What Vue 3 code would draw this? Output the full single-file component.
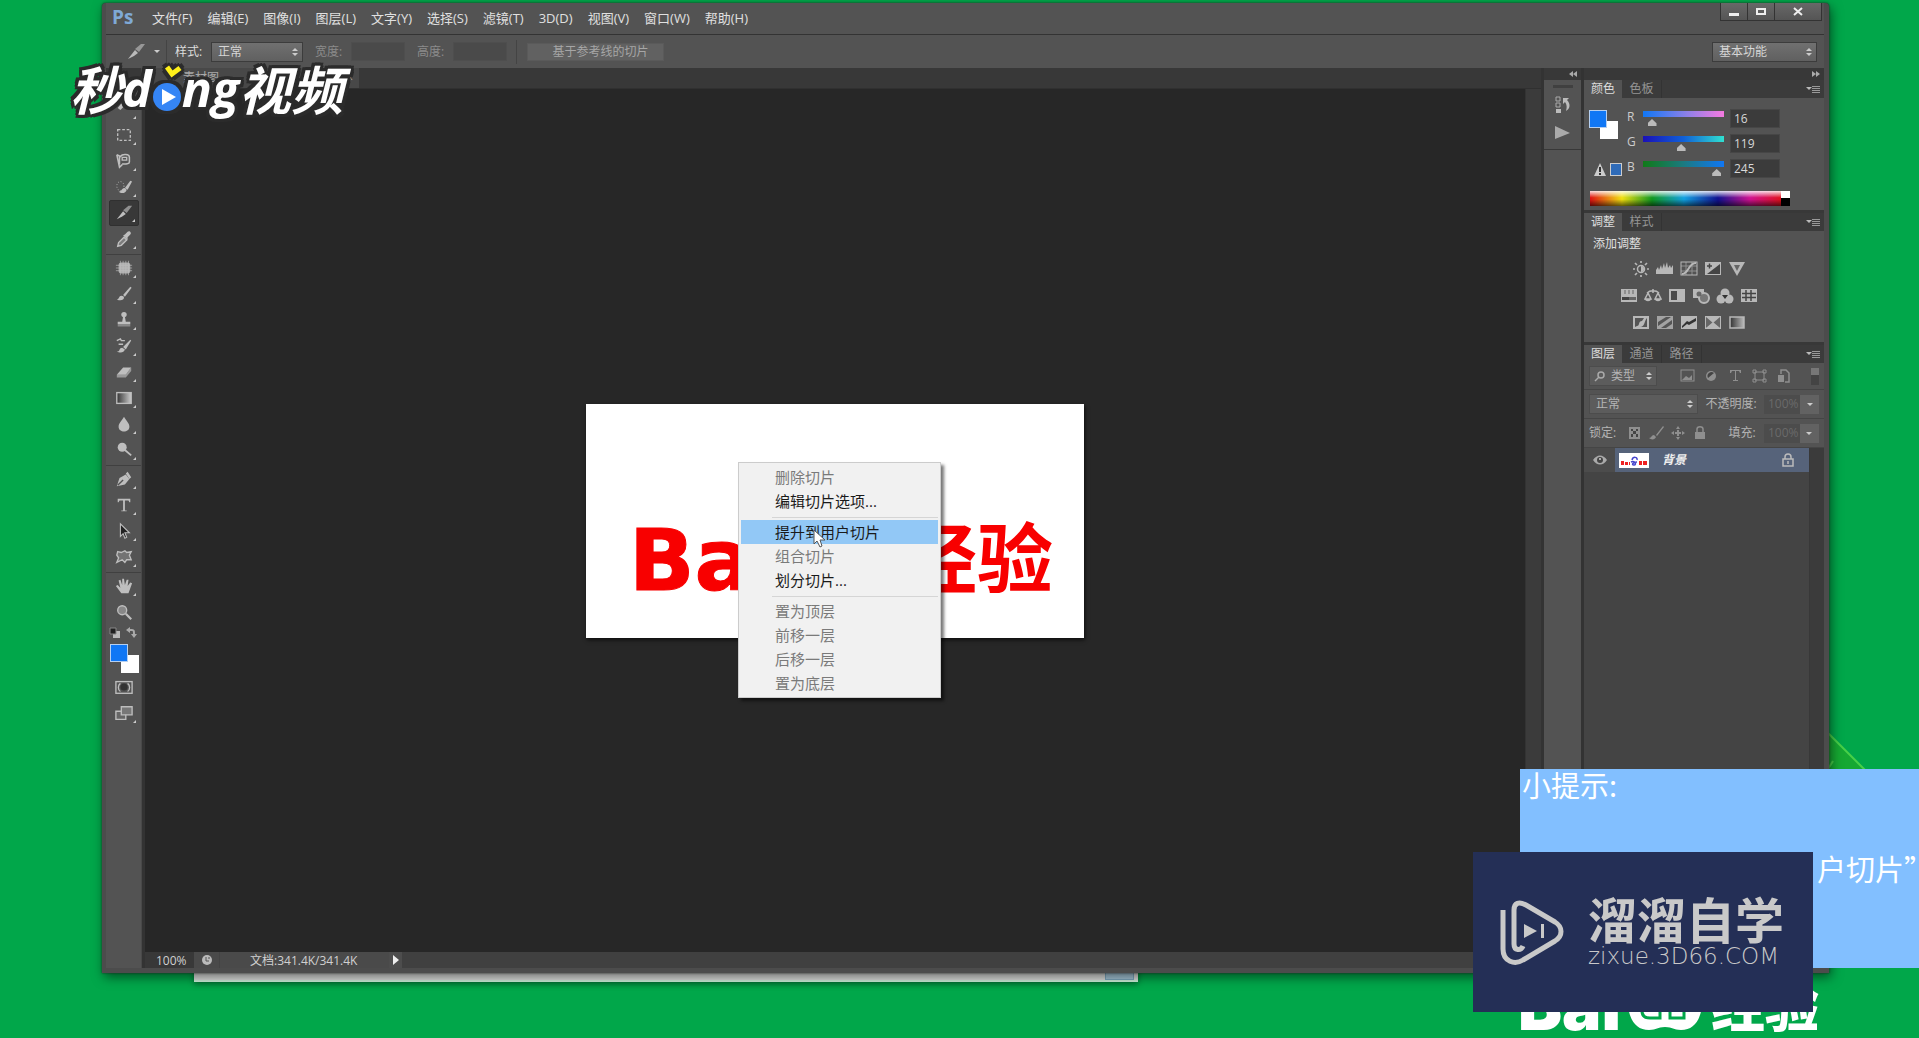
<script setup>
import { ref } from 'vue'

const menus = ['文件(F)', '编辑(E)', '图像(I)', '图层(L)', '文字(Y)', '选择(S)', '滤镜(T)', '3D(D)', '视图(V)', '窗口(W)', '帮助(H)']

const slice = '<path d="M2 17 9 8l3 3-4 3z" fill="currentColor"/><path d="M9 7l6-5h4l-6 8z" fill="currentColor" opacity=".65"/>'
const brush = '<path d="M2 16c3 0 2-4 5-4 2 0 3 1 3 2 0 3-4 4-8 2z" fill="currentColor"/><path d="M9 11 17 2l1.500 1L11 13z" fill="currentColor"/>'

const toolGroups = [
  [
    { name: '移动', art: '<path d="M3 9l4-5 3 2 4 0 3 5-3-1-2-2-3 0-3 3z" fill="currentColor"/>' },
    { name: '矩形选框', art: '<rect x="3" y="4" width="14" height="12" fill="none" stroke="currentColor" stroke-width="1.500" stroke-dasharray="3 2"/>' },
    { name: '套索', art: '<path d="M2 3l4 2c2-3 10-3 10 1v5c0 2-4 3-8 2M5 5v9M2 3l3 14 3-3" fill="none" stroke="currentColor" stroke-width="1.700"/><path d="M8 6h5v3H8z" fill="none" stroke="currentColor" stroke-width="1.500"/>' },
    { name: '快速选择', art: '<ellipse cx="6" cy="9" rx="4" ry="5" fill="none" stroke="currentColor" stroke-dasharray="1 2"/><path d="M4 15c4 0 3-4 7-4l2 2c-1 4-6 5-9 2z" fill="currentColor"/><path d="M11 11l6-8 2 1-5 9z" fill="currentColor"/>' },
    { name: '切片', art: slice, active: true },
    { name: '吸管', art: '<path d="M3 18l1-4 6-6 3 3-6 6z" fill="currentColor" fill-opacity=".4" stroke="currentColor" stroke-width="1.500"/><path d="M9 6l2-1 3-3c2-2 5 1 3 3l-3 3v3z" fill="currentColor"/>' }
  ],
  [
    { name: '修复画笔', art: '<path d="M6 2v16M9 2v16M12 2v16M15 2v16M1 7h18M1 10h18M1 13h18" stroke="currentColor" opacity=".7"/><rect x="4" y="4" width="13" height="12" rx="3" fill="currentColor" opacity=".85"/>' },
    { name: '画笔', art: brush },
    { name: '仿制图章', art: '<circle cx="10" cy="4" r="3" fill="currentColor"/><path d="M9 6h2l1 6h5v3H3v-3h5zM3 16h14v1H3z" fill="currentColor"/>' },
    { name: '历史记录画笔', art: '<path d="M2 4l4-2 1 2h4M4 8h5" stroke="currentColor" stroke-width="1.500" fill="none"/><path d="M2 16c4 1 2-4 6-4l3 2c-1 4-6 4-9 2z" fill="currentColor"/><path d="M9 11l8-8 1 1-6 10z" fill="currentColor"/>' },
    { name: '橡皮擦', art: '<path d="M2 13 9 5h9l-6 8z" fill="currentColor"/><path d="M2 13h10l6-8v4l-6 7H2z" fill="currentColor" opacity=".65"/>' },
    { name: '渐变', art: '<defs><linearGradient id="tg"><stop offset="0" stop-color="#333"/><stop offset="1" stop-color="#ccc"/></linearGradient></defs><rect x="2" y="4" width="16" height="12" fill="url(#tg)" stroke="currentColor" stroke-width="1.500"/>' },
    { name: '模糊', art: '<path d="M10 2c2 4 6 7 6 11 0 7-12 7-12 0 0-4 4-7 6-11z" fill="currentColor"/>' },
    { name: '减淡', art: '<circle cx="8" cy="7" r="5" fill="currentColor"/><path d="M11 10l7 6" stroke="currentColor" stroke-width="2"/>' }
  ],
  [
    { name: '钢笔', art: '<path d="M2 18 5 9l7-4 4 5-5 6z" fill="currentColor"/><path d="M12 4l2-2 4 6-2 2z" fill="currentColor"/><path d="M3 17l6-6" stroke="#535353" stroke-width="1.500"/>' },
    { name: '文字', art: '<path d="M3 3h14v4h-1l-1-2h-4v11h2v1H7v-1h2V5H5L4 7H3z" fill="currentColor"/>' },
    { name: '路径选择', art: '<path d="M6 2v14l3-3 2 5 2-1-2-5h5z" fill="#222" stroke="currentColor" stroke-width="1.200"/>' },
    { name: '自定形状', art: '<path d="M3 4l4 1 4-2 2 2 5-1-2 4 2 5-5 0-2 3-3-3-6 3 2-5-2-3z" fill="currentColor" fill-opacity=".3" stroke="currentColor" stroke-width="1.500"/>' }
  ],
  [
    { name: '抓手', art: '<path d="M7 18 1 10l2-1 3 3-2-8 2-1 2 6V2h2l1 7 2-6 2 0-1 7 3-4 2 1-4 11z" fill="currentColor"/>' },
    { name: '缩放', art: '<circle cx="8" cy="8" r="5" fill="currentColor" fill-opacity=".5" stroke="currentColor" stroke-width="1.500"/><path d="M12 12l6 6" stroke="currentColor" stroke-width="2.500"/>' }
  ]
]

const box = '<rect x="1" y="1" width="16" height="13" fill="currentColor"/>'
const adjustments = [
  [
    '<circle cx="9" cy="8" r="3.500" fill="none" stroke="currentColor" stroke-width="1.500"/><path d="M9 5a3 3 0 0 1 0 6z" fill="currentColor"/><path d="M9 0v2M9 14v2M1 8h2M15 8h2M3 2l2 2M13 12l2 2M15 2l-2 2M5 12l-2 2" stroke="currentColor" stroke-width="1.700"/>',
    '<path d="M0 13V9l2-3 1 3 2-5 1 4 2-6 1 5 2-6 1 6 2-3 1 3 2-3v9z" fill="currentColor"/>',
    '<rect x="1" y="1" width="16" height="13" fill="none" stroke="currentColor"/><path d="M1 5h16M1 10h16M6 1v13M12 1v13" stroke="currentColor" opacity=".6"/><path d="M2 13c7 0 6-11 14-11" stroke="currentColor" stroke-width="2" fill="none"/>',
    box + '<path d="M3 13 16 3v10z" fill="#444"/><path d="M3 5h5M5.500 2.500v5" stroke="#444" stroke-width="1.500"/>',
    '<path d="M1 1h16L9 15z" fill="currentColor"/><path d="M6 4h6l-3 6z" fill="#666"/>'
  ],
  [
    box + '<path d="M2 9h14v3H2z" fill="#666"/><path d="M2 9h7v3H2z" fill="#444"/><path d="M5 2v4M9 2v4M13 2v4" stroke="#666"/>',
    '<path d="M9 1v4M3 5c3-3 9-3 12 0M4 5l-3 6h6zM14 5l-3 6h6z" fill="none" stroke="currentColor" stroke-width="1.500"/><path d="M1 11h6c0 3-6 3-6 0zM11 11h6c0 3-6 3-6 0z" fill="currentColor"/>',
    box + '<path d="M3 3h6v9H3z" fill="#4a4a4a"/>',
    '<path d="M1 1h11v9H1z" fill="currentColor"/><circle cx="12" cy="10" r="5" fill="#777" stroke="currentColor" stroke-width="2"/><circle cx="7" cy="6" r="2.500" fill="#666"/>',
    '<circle cx="9" cy="5" r="4.500" fill="currentColor"/><circle cx="5" cy="11" r="4.500" fill="currentColor"/><circle cx="13" cy="11" r="4.500" fill="currentColor"/><path d="M6 7h6l-3 4z" fill="#333"/>',
    box + '<path d="M2 5.500h14M2 9.500h14M6 2v11M11 2v11" stroke="#444" stroke-width="1.500"/>'
  ],
  [
    box + '<path d="M3 12V3h9l-2 3c-4 0-2 5-5 5zM15 3v9H8c5 0 4-6 7-9z" fill="#555"/>',
    '<rect x="1" y="1" width="16" height="13" fill="currentColor" opacity=".8"/><path d="M2 7l8-5h5L2 11zM5 13l11-8v4l-6 4z" fill="#555"/>',
    box + '<path d="M2 11l5-5 2 1 7-4v3l-7 4-2-1-5 4z" fill="#333"/>',
    box + '<path d="M2 2l7 6 7-6v11L9 8l-7 5z" fill="#666"/><path d="M2 13l7-6 7 6z" fill="currentColor"/>',
    '<defs><linearGradient id="ag"><stop offset="0" stop-color="#333"/><stop offset="1" stop-color="#bbb"/></linearGradient></defs><rect x="2" y="2" width="14" height="11" fill="url(#ag)" stroke="currentColor" stroke-width="1.500"/>'
  ]
]

const filterIcons = [
  '<rect x="2" y="2" width="13" height="11" fill="none" stroke="currentColor"/><path d="M3 12l4-4 3 2 3-3v5z" fill="currentColor"/>',
  '<circle cx="8" cy="8" r="5" fill="currentColor"/><path d="M5 10a4 4 0 0 1 6-5z" fill="#444"/>',
  '<path d="M3 2h11v3h-1l-1-2H9v9h2v1H6v-1h2V3H5L4 5H3z" fill="currentColor"/>',
  '<path d="M4 4h9v8H4zM2 2h3v3H2zM12 2h3v3h-3zM2 11h3v3H2zM12 11h3v3h-3z" fill="none" stroke="currentColor"/>',
  '<path d="M6 6V2h5l3 3v9h-4" fill="none" stroke="currentColor" stroke-width="1.500"/><path d="M3 7h6v7H3z" fill="currentColor"/>'
]
const lockIcons = [
  '<rect x="3" y="2" width="11" height="12" fill="currentColor"/><path d="M5 4h2v2H5zM10 4h2v2h-2zM7 6h3v3H7zM5 9h2v3H5zM10 9h2v3h-2z" fill="#444"/>',
  '<path d="M1 13c3 0 2-3 5-3l2 2c-1 3-5 3-7 1zM8 10l7-9 1 1-7 9z" fill="currentColor"/>',
  '<path d="M8 1l2 3H6zM8 15l2-3H6zM1 8l3-2v4zM15 8l-3-2v4zM7 5h2v2h2v2H9v2H7V9H5V7h2z" fill="currentColor"/>',
  '<path d="M5 7V4c0-3 6-3 6 0v3" fill="none" stroke="currentColor" stroke-width="1.500"/><path d="M3 7h10v7H3z" fill="currentColor"/>'
]

const channels = ref([
  { key: 'R', value: 16, ramp: 'linear-gradient(90deg,#1077f5,#8f80e8 55%,#f57ae0)' },
  { key: 'G', value: 119, ramp: 'linear-gradient(90deg,#1a10b8,#1060d8 50%,#30e0d0)' },
  { key: 'B', value: 245, ramp: 'linear-gradient(90deg,#107a18,#1b7a80 50%,#1077f5)' }
])

const contextMenu = [
  [{ text: '删除切片', off: true }, { text: '编辑切片选项...' }],
  [{ text: '提升到用户切片', hot: true }, { text: '组合切片', off: true }, { text: '划分切片...' }],
  [{ text: '置为顶层', off: true }, { text: '前移一层', off: true }, { text: '后移一层', off: true }, { text: '置为底层', off: true }]
]
</script>

<template>
  <div class="desktop">
    <svg class="rays" viewBox="0 0 60 60" aria-hidden="true">
      <path d="M0 10v40h40z" fill="#16a832" />
      <path d="M0 10l45 45" stroke="#48d048" stroke-width="2" />
      <path d="M0 46l5-8" stroke="#48d048" stroke-width="2" />
    </svg>
    <div class="back-window"><i></i></div>
    <div class="brand">
      <span class="brand-latin">Bai</span>
      <svg width="76" height="50" viewBox="0 0 76 50" aria-hidden="true">
        <path d="M0 20C2 38 8 49 22 49c8 0 8-3 16-3s8 3 16 3c14 0 20-11 22-29z" fill="#fff" />
        <path d="M15 30c0 5 3 7 8 7h10V22M43 24v13h14V22M23 24v5M49 22v8" fill="none" stroke="#01a74a" stroke-width="3" />
      </svg>
      <span class="brand-cn">经验</span>
    </div>

    <main class="window">
      <header class="titlebar">
        <strong class="ps">Ps</strong>
        <nav class="menus">
          <button v-for="m in menus" :key="m">{{ m }}</button>
        </nav>
        <div class="winbtns">
          <button aria-label="最小化"><svg width="12" height="12"><path d="M1 7h10v3H1z" fill="#eee" /></svg></button>
          <button aria-label="最大化"><svg width="12" height="12"><rect x="2" y="3" width="8" height="5" fill="none" stroke="#eee" stroke-width="2" /></svg></button>
          <button class="close" aria-label="关闭"><svg width="12" height="12"><path d="M2 2l8 7M10 2L2 9" stroke="#eee" stroke-width="2" /></svg></button>
        </div>
      </header>

      <section class="options">
        <svg class="opt-slice" width="20" height="20" viewBox="0 0 20 20" v-html="slice"></svg>
        <i class="caret"></i>
        <i class="vline"></i>
        <label for="style">样式:</label>
        <span class="select style-select"><select id="style"><option>正常</option></select></span>
        <label for="w" class="dim">宽度:</label>
        <input id="w" class="size" disabled />
        <label for="h" class="dim">高度:</label>
        <input id="h" class="size" disabled />
        <i class="vline"></i>
        <button class="guide" disabled>基于参考线的切片</button>
        <span class="select workspace"><select aria-label="工作区"><option>基本功能</option></select></span>
      </section>

      <div class="body">
        <aside class="toolbar">
          <div v-for="(group, gi) in toolGroups" :key="gi" class="tool-group">
            <button v-for="t in group" :key="t.name" class="tool" :class="{ active: t.active }" :aria-label="t.name">
              <svg width="18" height="18" viewBox="0 0 20 20" v-html="t.art"></svg>
              <i v-if="t.name !== '缩放'"></i>
            </button>
          </div>
          <div class="mini">
            <svg width="30" height="14" aria-hidden="true">
              <path d="M4 5h7v7H4z" fill="#bbb" /><path d="M1 2h6v6H1z" fill="#222" stroke="#888" />
              <path d="M20 4h3c2 0 2 1 2 4" fill="none" stroke="#aaa" stroke-width="2" /><path d="M21 1v6l-4-3zM22 8h6l-3 4z" fill="#aaa" />
            </svg>
          </div>
          <div class="swatches"><i class="bg"></i><i class="fg"></i></div>
          <button class="tool" aria-label="快速蒙版">
            <svg width="18" height="18" viewBox="0 0 20 20"><rect x="1" y="4" width="18" height="13" fill="none" stroke="currentColor" stroke-width="1.5" /><circle cx="10" cy="10" r="4" fill="#333" /><path d="M6 6c-3 2-3 7 0 9M14 6c3 2 3 7 0 9" stroke="currentColor" fill="none" stroke-width="1.5" /></svg>
          </button>
          <button class="tool" aria-label="屏幕模式">
            <svg width="18" height="18" viewBox="0 0 20 20"><path d="M1 8h11v9H1z" fill="#666" stroke="currentColor" stroke-width="1.5" /><path d="M7 3h12v9H7z" fill="#777" stroke="currentColor" stroke-width="1.5" /></svg>
            <i></i>
          </button>
        </aside>

        <section class="document">
          <div class="doctabs"><button>素材图<span>×</span></button></div>
          <div class="view">
            <div class="canvas">
              <div class="artboard"><span class="art-latin">Ba</span><span class="art-cn">经验</span></div>
            </div>
            <div class="vscroll"></div>
          </div>
          <footer class="status">
            <span class="zoom">100%</span>
            <span class="stat-icon"><svg width="12" height="12"><circle cx="6" cy="6" r="5" fill="#bbb" /><path d="M5 3v4h3M8 3v2" stroke="#555" fill="none" /></svg></span>
            <span class="docsize">文档:341.4K/341.4K</span>
            <button aria-label="更多"><svg width="8" height="10"><path d="M1 0l6 5-6 5z" fill="#eee" /></svg></button>
          </footer>
        </section>

        <aside class="dock">
          <div class="dock-head"><svg width="8" height="6"><path d="M4 0v6L0 3zM8 0v6L4 3z" fill="#aaa" /></svg></div>
          <div class="dock-body">
            <i class="grip"></i>
            <svg width="16" height="18"><path d="M1 1h4v4H1zM1 7h4v4H1z" fill="none" stroke="#aaa" /><path d="M1 13h5v4H1z" fill="#bbb" /><path d="M8 2h6l-2 2c4 4 3 9-1 11 1-4 1-6-1-9l-2 2z" fill="#bbb" /></svg>
            <svg width="16" height="14"><path d="M0 0l15 7-15 6z" fill="#aaa" /></svg>
          </div>
        </aside>

        <aside class="panels">
          <div class="panels-head"><svg width="8" height="6"><path d="M0 0v6l4-3zM4 0v6l4-3z" fill="#aaa" /></svg></div>

          <section class="panel">
            <div class="tabs"><button class="on">颜色</button><button>色板</button><i class="flyout"></i></div>
            <div class="color">
              <div class="color-left">
                <div class="swatches"><i class="bg"></i><i class="fg"></i></div>
                <div class="gamut"><svg width="12" height="13"><path d="M6 0l6 13H0z" fill="#ccc" /><path d="M6 4v5M6 10v2" stroke="#333" stroke-width="2" /></svg><i></i></div>
              </div>
              <div class="channels">
                <div v-for="c in channels" :key="c.key" class="channel">
                  <label :for="'ch' + c.key">{{ c.key }}</label>
                  <input v-model="c.value" type="range" min="0" max="255" :aria-label="c.key" :style="{ '--ramp': c.ramp }" />
                  <input :id="'ch' + c.key" v-model="c.value" class="num" />
                </div>
              </div>
              <div class="spectrum"><i></i></div>
            </div>
          </section>

          <section class="panel">
            <div class="tabs"><button class="on">调整</button><button>样式</button><i class="flyout"></i></div>
            <div class="adjust">
              <p>添加调整</p>
              <div v-for="(row, ri) in adjustments" :key="ri" class="adj-row">
                <svg v-for="(a, i) in row" :key="i" width="18" height="16" v-html="a"></svg>
              </div>
            </div>
          </section>

          <section class="panel layers">
            <div class="tabs"><button class="on">图层</button><button>通道</button><button>路径</button><i class="flyout"></i></div>
            <div class="lrow">
              <span class="select kind"><svg width="12" height="12"><circle cx="7" cy="5" r="3" fill="none" stroke="#aaa" stroke-width="1.5" /><path d="M5 7l-4 4" stroke="#aaa" stroke-width="1.5" /></svg><select aria-label="筛选"><option>类型</option></select></span>
              <div class="icons filters"><svg v-for="(a, i) in filterIcons" :key="i" width="16" height="16" v-html="a"></svg></div>
              <i class="toggle"></i>
            </div>
            <div class="lrow">
              <span class="select blend"><select aria-label="混合模式"><option>正常</option></select></span>
              <label for="op">不透明度:</label>
              <span class="pct"><input id="op" value="100%" disabled /><button aria-label="不透明度"><i class="caret"></i></button></span>
            </div>
            <div class="lrow">
              <span>锁定:</span>
              <div class="icons locks"><svg v-for="(a, i) in lockIcons" :key="i" width="16" height="16" v-html="a"></svg></div>
              <label for="fill">填充:</label>
              <span class="pct"><input id="fill" value="100%" disabled /><button aria-label="填充"><i class="caret"></i></button></span>
            </div>
            <div class="layer-list">
              <div class="layer">
                <span class="eye"><svg width="14" height="10"><path d="M0 5c4-6 10-6 14 0-4 6-10 6-14 0z" fill="#aaa" /><circle cx="7" cy="5" r="3" fill="#444" /><circle cx="7" cy="4" r="1" fill="#ccc" /></svg></span>
                <div class="layer-main">
                  <svg width="30" height="15" aria-hidden="true"><path d="M0 0h30v15H0z" fill="#fff" /><path d="M2 8h3v4H2zM6 9h3v3H6zM10 9h1v3h-1zM20 8h3v4h-3zM24 8h4v4h-4z" fill="#e22" /><path d="M13 7c1-4 6-3 5 0M12 9c4-2 6 3 3 3s-1-3 3-3" stroke="#44c" stroke-width="1.500" fill="none" /></svg>
                  <span class="layer-name">背景</span>
                  <svg class="lk" width="12" height="14"><path d="M1 6h10v7H1zM3 6V4c0-4 6-4 6 0v2M6 8v3" fill="none" stroke="#bbb" stroke-width="1.5" /></svg>
                </div>
              </div>
              <div class="lscroll"></div>
            </div>
          </section>
        </aside>
      </div>
    </main>

    <div class="context">
      <div v-for="(g, gi) in contextMenu" :key="gi" class="ctx-group">
        <button v-for="it in g" :key="it.text" :disabled="it.off" :class="{ hot: it.hot }">{{ it.text }}</button>
      </div>
    </div>
    <svg class="cursor" width="14" height="20" viewBox="0 0 14 20" aria-hidden="true"><path d="M1 1v14l3-3 3 6 2-1-2-6h5z" fill="#fff" stroke="#555" /></svg>

    <div class="logo">
      <span class="cn">秒</span><span class="la">d</span>
      <svg width="30" height="46" viewBox="0 0 30 46" aria-hidden="true"><circle cx="15" cy="32" r="14" fill="#3585f5" /><path d="M10 24v16l14-8z" fill="#fff" /><path d="M15 2l5 7 8-6" fill="none" stroke="#fff01a" stroke-width="5" /></svg>
      <span class="la">ng</span><span class="cn">视频</span>
    </div>

    <div class="tip"><p>小提示:</p><p class="tip-end">户切片”</p></div>

    <div class="mark">
      <svg width="66" height="68" viewBox="0 0 66 68" aria-hidden="true">
        <path d="M4 12v39c0 13 12 16 20 11l32-19c8-5 8-14 0-19L27 7c-7-4-12-2-12 5v34c0 7 7 7 9 2" fill="none" stroke="#c9c9c9" stroke-width="5" />
        <path d="M25 26v14l13-7zM42 26h3v14h-3z" fill="#c9c9c9" />
      </svg>
      <div><strong>溜溜自学</strong><span>zixue.3D66.COM</span></div>
    </div>
  </div>
</template>

<style>
body { margin: 0; }
</style>

<style scoped>
* { box-sizing: border-box; }
button, input, select { font: inherit; color: inherit; border: 0; padding: 0; margin: 0; background: none; border-radius: 0; }
p { margin: 0; }
svg { display: block; flex: none; }
i { display: block; flex: none; }

.desktop {
  position: relative;
  display: flex;
  height: 100vh;
  padding: 3px 90px 65px 102px;
  overflow: hidden;
  background: #01a74a;
  color: #d6d6d6;
  font: 12px/16px "Open Sans", "Noto Sans CJK SC", sans-serif;
}
.rays { position: absolute; right: 31px; bottom: 255px; width: 60px; height: 60px; }
.back-window { position: absolute; left: 194px; width: 944px; bottom: 56px; height: 40px; background: #dcdedc; border-bottom: 2px solid #cdf0da; box-shadow: 0 2px 6px #0006; }
.back-window i { position: absolute; right: 4px; bottom: 0; width: 29px; height: 12px; background: #a5c6d8; border: 1px solid #7fa9c0; }
.brand { position: absolute; right: 100px; bottom: 7px; display: flex; align-items: flex-end; color: #fff; }
.brand-latin { margin-right: 6px; font: 900 66px/50px Inter, sans-serif; }
.brand-cn { margin-left: 8px; font: 900 54px/54px "Noto Sans CJK SC", sans-serif; }

.window {
  position: relative;
  flex: 1;
  display: flex;
  flex-direction: column;
  min-width: 0;
  padding: 0 5px 5px 4px;
  background: #4c4c4c;
  border-radius: 4px 4px 0 0;
  box-shadow: 0 0 2px #222, 2px 4px 12px #0008;
}
.titlebar { display: flex; align-items: center; height: 32px; border-bottom: 1px solid #333; background: #535353; }
.ps { margin: 0 0 4px 6px; width: 40px; color: #7fa9d6; font: 700 19px/24px "Open Sans", sans-serif; }
.menus { display: flex; gap: 15px; margin-bottom: 2px; font-size: 13px; line-height: 20px; }
.menus button { color: #e0e0e0; white-space: nowrap; }
.winbtns { display: flex; align-self: flex-start; margin-left: auto; margin-right: 2px; border: 1px solid #333; border-top: 0; background: linear-gradient(#686868, #555); }
.winbtns button { display: grid; place-items: center; width: 27px; height: 17px; border-right: 1px solid #333; }
.winbtns .close { width: 46px; border: 0; }

.options { display: flex; align-items: center; height: 33px; background: #535353; }
.opt-slice { margin-left: 20px; color: #bbb; }
.caret { width: 0; height: 0; border: 3px solid transparent; border-top-color: #ccc; border-bottom: 0; }
.options > .caret { margin: 0 6px 0 8px; }
.vline { width: 1px; height: 24px; background: #444; }
.options label { margin-left: 8px; color: #ddd; width: 28px; white-space: nowrap; }
.options .dim { margin-left: 12px; color: #8b8b8b; }
.size { width: 54px; height: 19px; margin-left: 8px; background: #4a4a4a; border: 1px solid #4e4e4e; }
.size + .vline { margin: 0 10px 0 9px; }
.guide { width: 137px; height: 18px; padding-left: 10px; background: #616161; color: #a6a6a6; border: 1px solid #5a5a5a; line-height: 16px; }

.select { position: relative; display: flex; align-items: center; height: 20px; background: linear-gradient(#707070, #606060); border: 1px solid #3c3c3c; }
.select select { appearance: none; flex: 1; width: 100%; padding-left: 6px; outline: 0; line-height: 18px; }
.select::before, .select::after { content: ""; position: absolute; right: 4px; border: 3px solid transparent; }
.select::before { top: 5px; border-top: 0; border-bottom-color: #ccc; }
.select::after { bottom: 5px; border-bottom: 0; border-top-color: #ccc; }
.style-select { width: 92px; margin-left: 8px; }
.workspace { width: 105px; margin-left: auto; margin-right: 7px; }

.body { flex: 1; display: flex; gap: 3px; min-height: 0; background: #333; }
.toolbar { width: 36px; flex: none; padding-top: 28px; border-right: 1px solid #494949; background: linear-gradient(#383838 12px, #535353 12px); }
.tool-group { padding-bottom: 2px; border-bottom: 1px solid #404040; }
.tool-group:nth-child(4) { border: 0; padding: 0; }
.tool { position: relative; display: grid; place-items: center; width: 30px; height: 26px; margin: 0 3px; color: #bebebe; }
.tool.active { background: #383838; border: 1px solid #303030; border-radius: 2px; }
.tool i { position: absolute; right: 3px; bottom: 3px; width: 3px; height: 3px; background: #ccc; clip-path: polygon(100% 0, 100% 100%, 0 100%); }
.mini { height: 17px; padding: 1px 3px; }
.swatches { position: relative; width: 29px; height: 29px; }
.swatches i { position: absolute; width: 18px; height: 18px; }
.swatches .fg { left: 0; top: 0; background: #1077f5; border: 1px solid #b5cff0; }
.swatches .bg { right: 0; bottom: 0; background: #fff; }
.toolbar .swatches { margin: 2px 4px 1px; }

.document { flex: 1; display: flex; flex-direction: column; min-width: 0; }
.doctabs { height: 21px; background: #383838; border-bottom: 1px solid #303030; }
.doctabs button { display: flex; justify-content: space-between; width: 214px; height: 20px; padding: 2px 6px 0 38px; background: #484848; color: #a8a8a8; line-height: 16px; }
.view { flex: 1; display: flex; min-height: 0; }
.canvas { flex: 1; display: grid; place-items: center; background: #272727; }
.artboard { display: flex; align-items: flex-end; justify-content: space-between; width: 498px; height: 234px; padding: 0 31px 34px 43px; background: #fff; color: #f80000; box-shadow: 1px 2px 4px #000a; }
.art-latin { -webkit-text-stroke: 1px #f80000; font: 700 86px/88px "DejaVu Sans", sans-serif; }
.art-cn { font: 700 76px/100px "Noto Sans CJK SC", sans-serif; }
.vscroll { width: 16px; background: #3b3b3b; border-left: 1px solid #333; }
.status { display: flex; height: 16px; background: #404040; line-height: 17px; color: #d0d0d0; }
.zoom { width: 49px; padding-left: 11px; background: #383838; }
.stat-icon { display: grid; place-items: center; width: 26px; background: #4a4a4a; border-right: 1px solid #444; }
.docsize { width: 169px; padding-left: 30px; background: #4a4a4a; white-space: nowrap; }
.status button { display: grid; place-items: center; width: 13px; background: #4d4d4d; }

.dock { width: 37px; flex: none; background: #535353; }
.dock-head, .panels-head { display: flex; align-items: center; justify-content: flex-end; height: 12px; padding-right: 4px; background: #383838; }
.dock-body { display: flex; flex-direction: column; align-items: center; gap: 12px; height: 70px; padding-top: 5px; border-bottom: 1px solid #383838; }
.grip { width: 20px; height: 3px; margin-bottom: -4px; background: #404040; }

.panels { display: flex; flex-direction: column; width: 240px; flex: none; }
.panel { background: #535353; border-bottom: 3px solid #383838; }
.tabs { display: flex; height: 18px; background: #3b3b3b; }
.tabs button { width: 40px; color: #959595; border-right: 1px solid #333; line-height: 18px; }
.tabs .on { width: 38px; background: #535353; color: #ddd; border: 0; }
.flyout { position: relative; width: 8px; height: 7px; margin: 6px 4px 0 auto; background: repeating-linear-gradient(#999 0 1px, transparent 1px 2px); }
.flyout::before { content: ""; position: absolute; left: -6px; top: 1px; border: 3px solid transparent; border-top-color: #bbb; border-bottom: 0; }

.color { display: grid; grid-template-columns: 38px 1fr; height: 112px; padding: 11px 0 0 5px; }
.color-left { padding-top: 1px; }
.gamut { display: flex; align-items: center; gap: 4px; margin: 24px 0 0 5px; }
.gamut i { width: 12px; height: 13px; background: #2f6bb8; border: 1px solid #ccc; }
.channel { display: flex; height: 25px; }
.channel label { width: 16px; color: #ccc; line-height: 16px; }
.channel input[type="range"] { appearance: none; width: 81px; height: 15px; margin-top: 2px; background: var(--ramp) 0 0 / 100% 6px no-repeat; }
.channel input[type="range"]::-webkit-slider-thumb { appearance: none; width: 9px; height: 7px; margin-top: 8px; background: #bbb; clip-path: polygon(50% 0, 100% 60%, 100% 100%, 0 100%, 0 60%); }
.num { width: 50px; height: 19px; margin-left: 6px; padding-left: 3px; background: #3b3b3b; border: 1px solid #464646; color: #d8d8d8; }
.spectrum { grid-column: 1 / 3; display: flex; justify-content: flex-end; width: 200px; height: 15px; margin: 3px 0 0 1px; background: linear-gradient(#fffd, #fff0 45%, #0000 55%, #0009), linear-gradient(90deg, #e01010, #f0e010 16%, #109820 31%, #10a0e0 47%, #101090 64%, #d01090 80%, #e01020 95%); }
.spectrum i { width: 9px; background: linear-gradient(#fff 50%, #000 50%); }

.adjust { height: 111px; padding: 5px 0 0 9px; }
.adjust p { color: #e0e0e0; margin-bottom: 9px; }
.adj-row { display: flex; justify-content: center; gap: 6px; width: 192px; height: 27px; color: #b8b8b8; }

.layers { flex: 1; display: flex; flex-direction: column; border: 0; }
.lrow { display: flex; align-items: center; justify-content: space-between; height: 27px; padding: 0 5px; border-bottom: 1px solid #454545; color: #b4b4b4; white-space: nowrap; }
.lrow .select { background: #5c5c5c; border-color: #4c4c4c; }
.kind { width: 68px; padding-left: 4px; }
.kind select { padding-left: 5px; }
.blend { width: 109px; }
.icons { display: flex; gap: 8px; color: #8f8f8f; }
.filters { margin: 0 4px 0 6px; }
.locks { gap: 6px; margin: 0 12px 0 2px; }
.toggle { width: 8px; height: 17px; background: linear-gradient(#777 40%, #444 40%); }
.pct { display: flex; height: 19px; }
.pct input { width: 36px; padding-left: 4px; background: #4c4c4c; color: #6a6a6a; }
.pct button { display: grid; place-items: center; width: 19px; background: #626262; }
.lrow + .lrow { height: 29px; }
.layer-list { flex: 1; display: flex; background: #444; }
.layer { flex: 1; display: flex; height: 24px; }
.eye { display: grid; place-items: center; width: 31px; background: #4c4c4c; }
.layer-main { flex: 1; display: flex; align-items: center; padding: 0 15px 0 4px; background: #56637a; }
.layer-name { margin-left: 13px; font-style: italic; font-weight: 600; color: #eee; }
.lk { margin-left: auto; }
.lscroll { width: 15px; background: #3b3b3b; border-left: 1px solid #383838; }

.context { position: absolute; left: 738px; top: 462px; width: 203px; padding: 2px; background: #f1f1f1; border: 1px solid #ccc; box-shadow: 3px 3px 3px #0008; color: #1a1a1a; font-size: 15px; }
.ctx-group + .ctx-group { margin-top: 4px; padding-top: 3px; background: linear-gradient(#d5d5d5, #d5d5d5) 31px 0 / 170px 1px no-repeat; }
.context button { display: block; width: 100%; height: 24px; padding-left: 34px; text-align: left; line-height: 24px; }
.context button:disabled { color: #7a7a7a; }
.context .hot { background: #92c8f6; }
.cursor { position: absolute; left: 813px; top: 529px; }

.logo {
  position: absolute; left: 70px; top: 58px; display: flex; align-items: center; height: 60px; color: #fff;
  filter: drop-shadow(3px 0 0 #2b2b2b) drop-shadow(-3px 0 0 #2b2b2b) drop-shadow(0 3px 0 #2b2b2b) drop-shadow(0 -3px 0 #2b2b2b);
}
.logo .cn { font: italic 700 52px/60px "Noto Sans CJK SC", sans-serif; }
.logo .la { font: italic 700 50px/60px "Open Sans", sans-serif; }

.tip { position: absolute; right: 0; bottom: 70px; width: 399px; height: 199px; padding-left: 2px; background: #82bfff; color: #fff; font: 29px/30px "Noto Sans CJK SC", sans-serif; }
.tip-end { margin: 54px 0 0 295px; white-space: nowrap; }

.mark { position: absolute; right: 106px; bottom: 26px; display: flex; align-items: center; gap: 23px; width: 340px; height: 160px; padding-left: 26px; background: #242f56; color: #c9c9c9; }
.mark strong { display: block; font: 700 49px/48px "Noto Sans CJK SC", sans-serif; }
.mark span { display: block; font: 200 23px/28px "DejaVu Sans", sans-serif; }
</style>
